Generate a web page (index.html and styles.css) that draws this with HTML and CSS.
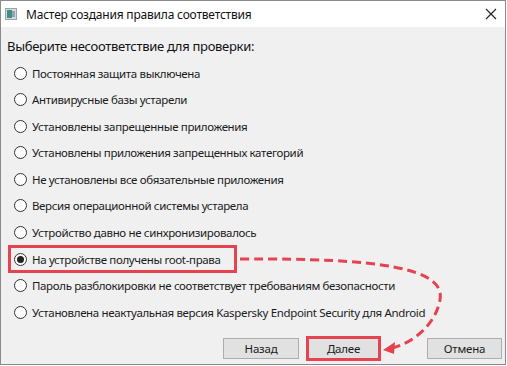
FILE: index.html
```html
<!DOCTYPE html>
<html lang="ru">
<head>
    <meta charset="UTF-8">
    <meta name="viewport" content="width=device-width, initial-scale=1.0">
    <title>Мастер создания правила соответствия</title>
    <link rel="stylesheet" href="styles.css">
</head>
<body>
    <div class="ventana">
        <div class="titulo">
            <span class="icono">
                <svg width="12" height="12" viewBox="0 0 12 12">
                    <rect x="0.5" y="0.5" width="11" height="11" fill="#d7dadb" stroke="#9aa3a6"/>
                    <rect x="2" y="2" width="5" height="8" fill="#3f8f86"/>
                    <rect x="7" y="3" width="3" height="6" fill="#8fa3b8"/>
                </svg>
            </span>
            <span class="texto-titulo">Мастер создания правила соответствия</span>
            <span class="cerrar">
                <svg width="12" height="12" viewBox="0 0 12 12">
                    <path d="M1 1 L11 11 M11 1 L1 11" stroke="#222" stroke-width="1.1"/>
                </svg>
            </span>
        </div>

        <div class="contenido">
            <p class="pregunta">Выберите несоответствие для проверки:</p>
            <div class="opciones">
                <label class="opcion"><span class="radio"></span>Постоянная защита выключена</label>
                <label class="opcion"><span class="radio"></span>Антивирусные базы устарели</label>
                <label class="opcion"><span class="radio"></span>Установлены запрещенные приложения</label>
                <label class="opcion"><span class="radio"></span>Установлены приложения запрещенных категорий</label>
                <label class="opcion"><span class="radio"></span>Не установлены все обязательные приложения</label>
                <label class="opcion"><span class="radio"></span>Версия операционной системы устарела</label>
                <label class="opcion"><span class="radio"></span>Устройство давно не синхронизировалось</label>
                <label class="opcion marcada"><span class="radio activo"></span>На устройстве получены root-права</label>
                <label class="opcion"><span class="radio"></span>Пароль разблокировки не соответствует требованиям безопасности</label>
                <label class="opcion"><span class="radio"></span>Установлена неактуальная версия Kaspersky Endpoint Security для Android</label>
            </div>
        </div>

        <div class="botones">
            <button class="boton">Назад</button>
            <button class="boton siguiente">Далее</button>
            <button class="boton cancelar">Отмена</button>
        </div>

        <!-- flecha de la anotacion -->
        <svg class="flecha" width="507" height="366" viewBox="0 0 507 366">
            <path d="M240 259 C 380 258 446 268 440 300 C 435 326 412 343 392 348"
                  fill="none" stroke="#e5434f" stroke-width="3" stroke-dasharray="9 5"/>
            <path d="M383 350 L395 342 L394 354 Z" fill="#e5434f"/>
        </svg>
    </div>
</body>
</html>
```

FILE: styles.css
```css
*{
    box-sizing: border-box;
}
body{
    margin: 0;
    background-color: #ffffff;
    font-family: "Segoe UI", "Noto Sans", sans-serif;
}
.ventana{
    position: relative;
    width: 506px;
    height: 365px;
    border: 1px solid #8a8a8a;
    background-color: #f0f0f0;
    display: flex;
    flex-direction: column;
}
.titulo{
    height: 26px;
    background-color: #ffffff;
    display: flex;
    align-items: center;
    padding: 0 6px 0 4px;
}
.icono{
    display: flex;
    margin-right: 9px;
}
.texto-titulo{
    flex: 1;
    font-size: 12px;
    letter-spacing: -0.2px;
    color: #111;
}
.cerrar{
    display: flex;
    margin-right: 2px;
}
.contenido{
    flex: 1;
    padding: 0 6px;
}
.pregunta{
    margin: 10px 0 8px 0;
    font-size: 13px;
    letter-spacing: -0.3px;
    color: #111;
}
.opciones{
    display: flex;
    flex-direction: column;
    gap: 6.6px;
    padding-left: 5px;
}
.opcion{
    display: flex;
    align-items: center;
    width: fit-content;
    height: 20px;
    padding-left: 2px;
    font-size: 11.5px;
    letter-spacing: -0.35px;
    color: #1b1b1b;
}
.radio{
    width: 13px;
    height: 13px;
    border: 1px solid #333;
    border-radius: 50%;
    background-color: #fff;
    margin-right: 5px;
    display: flex;
    align-items: center;
    justify-content: center;
}
.activo::after{
    content: "";
    width: 7px;
    height: 7px;
    border-radius: 50%;
    background-color: #222;
}
.marcada{
    padding-right: 12px;
    outline: 3px solid #e5434f;
    outline-offset: 1px;
}
.botones{
    display: flex;
    padding: 0 3px 3px 222px;
    height: 27px;
}
.boton{
    width: 76px;
    height: 21px;
    margin-top: 1px;
    background-color: #e1e1e1;
    border: 1px solid #adadad;
    font-family: "Segoe UI", "Noto Sans", sans-serif;
    font-size: 11.5px;
    letter-spacing: -0.2px;
    color: #1b1b1b;
    padding: 0;
}
.siguiente{
    margin-left: 7px;
    width: 75px;
    height: 25px;
    margin-top: -1px;
    border: 3px solid #e5434f;
}
.cancelar{
    margin-left: auto;
    width: 75px;
}
.flecha{
    position: absolute;
    left: -1px;
    top: -1px;
    pointer-events: none;
}
```
